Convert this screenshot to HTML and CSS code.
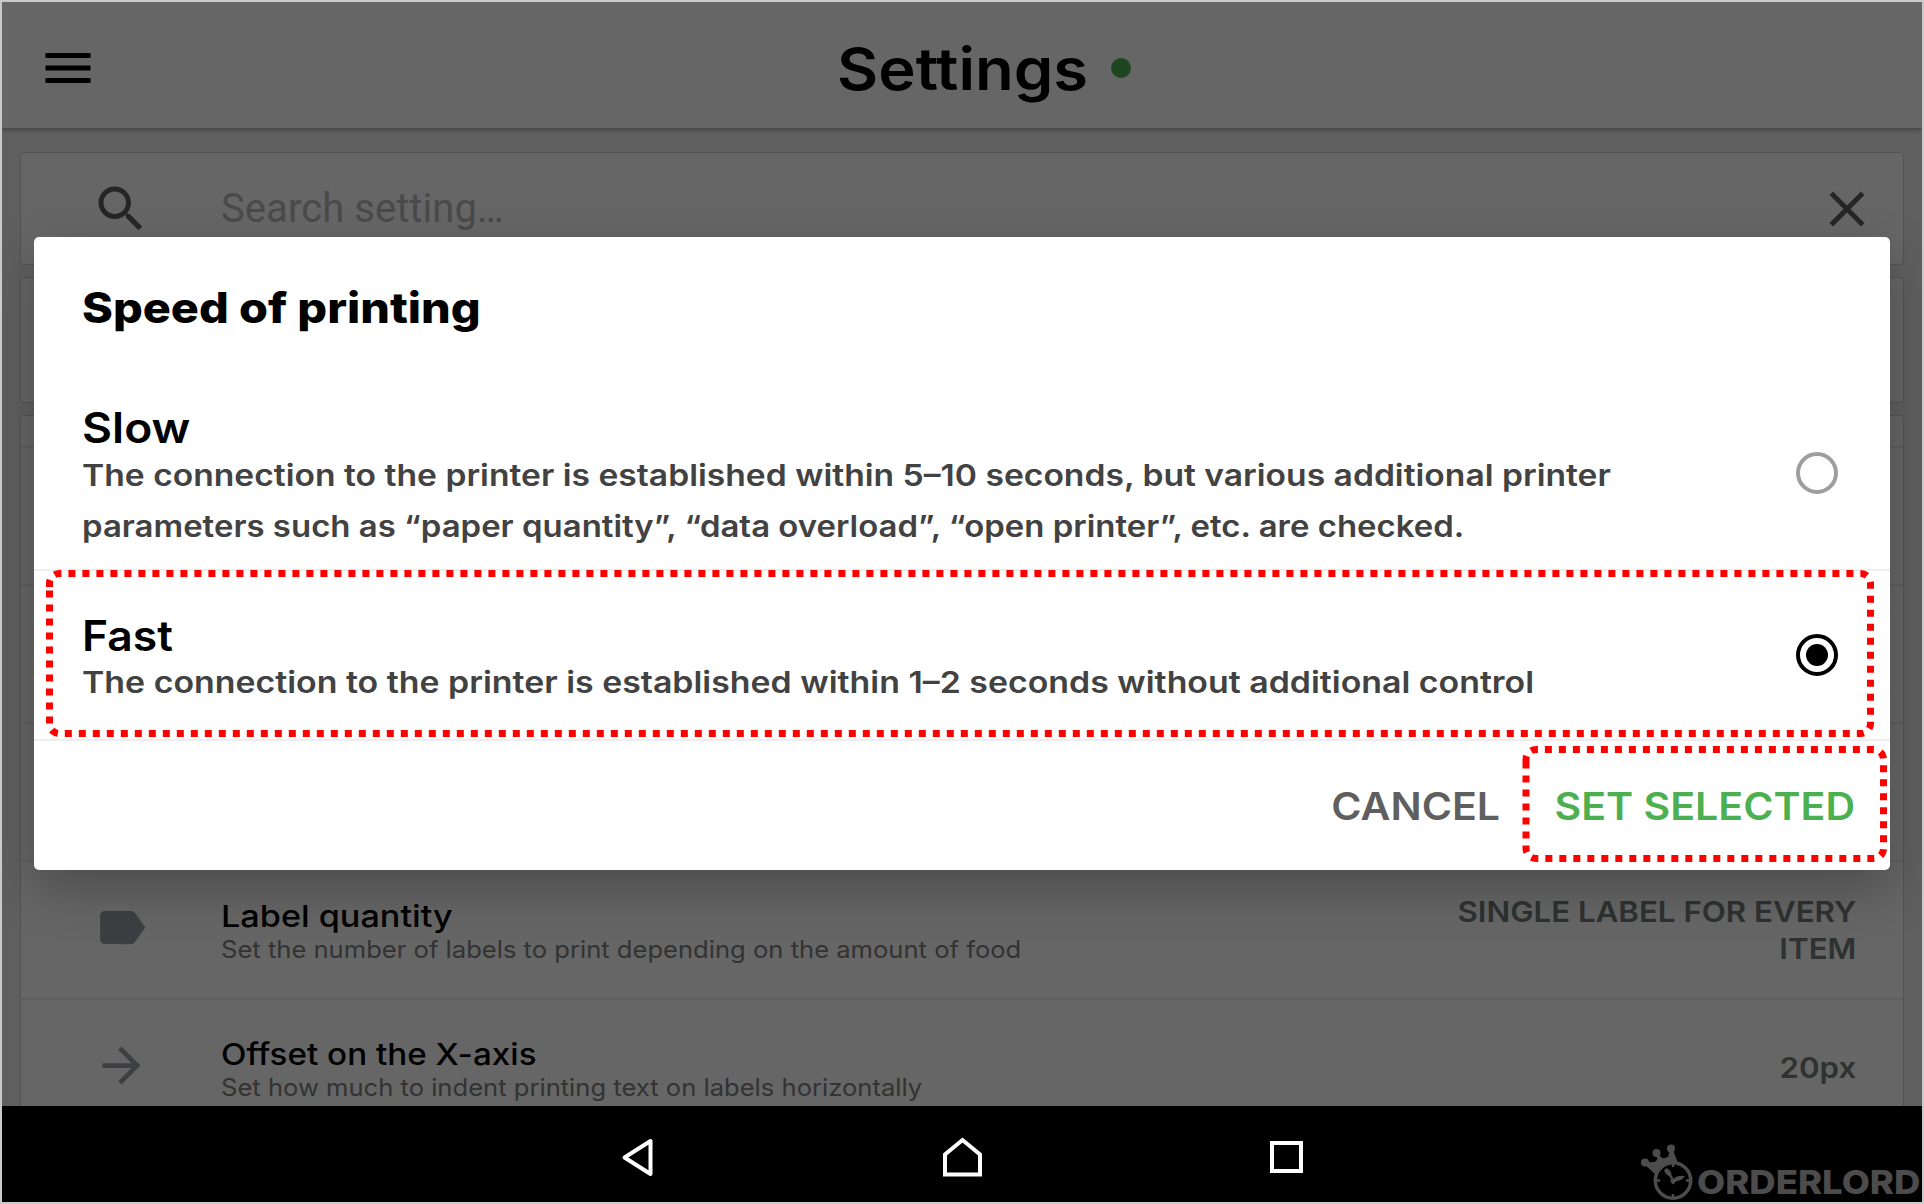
FILE: index.html
```html
<!DOCTYPE html>
<html lang="en">
<head>
<meta charset="utf-8">
<title>Settings</title>
<link rel="stylesheet" href="styles.css">
</head>
<body>
<div class="device">
  <div class="app">
    <header class="topbar">
      <svg class="menu-icon" viewBox="0 0 24 24"><path d="M3 18h18v-2H3v2zm0-5h18v-2H3v2zm0-7v2h18V6H3z"/></svg>
      <h1 class="page-title">Settings</h1>
      <span class="status-dot"></span>
    </header>
    <main class="content">
      <div class="card search">
        <svg class="search-icon" viewBox="0 0 24 24"><path d="M15.5 14h-.79l-.28-.27C15.41 12.59 16 11.11 16 9.5 16 5.91 13.09 3 9.5 3S3 5.91 3 9.5 5.91 16 9.5 16c1.61 0 3.09-.59 4.23-1.57l.27.28v.79l5 4.99L20.49 19l-4.99-5zm-6 0C7.01 14 5 11.99 5 9.5S7.01 5 9.5 5 14 7.01 14 9.5 11.99 14 9.5 14z"/></svg>
        <span class="placeholder">Search setting…</span>
        <svg class="clear-icon" viewBox="0 0 24 24"><path d="M19 6.41L17.59 5 12 10.59 6.41 5 5 6.41 10.59 12 5 17.59 6.41 19 12 13.41 17.59 19 19 17.59 13.41 12z"/></svg>
      </div>
      <div class="card group"></div>
      <div class="card list">
        <div class="list-head"></div>
        <div class="row"></div>
        <div class="row"></div>
        <div class="row"></div>
        <div class="row">
          <svg class="row-icon" viewBox="0 0 24 24"><path d="M17.63 5.84C17.27 5.33 16.67 5 16 5L5 5.01C3.9 5.01 3 5.9 3 7v10c0 1.1.9 1.99 2 1.99L16 19c.67 0 1.27-.33 1.63-.84L22 12l-4.37-6.16z"/></svg>
          <div class="row-text">
            <div class="row-title quantity">Label quantity</div>
            <div class="row-sub">Set the number of labels to print depending on the amount of food</div>
          </div>
          <div class="row-value">SINGLE LABEL FOR EVERY<br>ITEM</div>
        </div>
        <div class="row">
          <svg class="row-icon" viewBox="0 0 24 24"><path d="M12 4l-1.41 1.41L16.17 11H4v2h12.17l-5.58 5.59L12 20l8-8z"/></svg>
          <div class="row-text">
            <div class="row-title">Offset on the X-axis</div>
            <div class="row-sub">Set how much to indent printing text on labels horizontally</div>
          </div>
          <div class="row-value single">20px</div>
        </div>
      </div>
    </main>
    <div class="backdrop"></div>
    <section class="dialog">
      <h2 class="dialog-title">Speed of printing</h2>
      <div class="option slow">
        <div class="option-text">
          <div class="option-title">Slow</div>
          <div class="option-desc line-a">The connection to the printer is established within 5–10 seconds, but various additional printer</div>
          <div class="option-desc line-b">parameters such as “paper quantity”, “data overload”, “open printer”, etc. are checked.</div>
        </div>
        <span class="radio"></span>
      </div>
      <div class="option fast">
        <div class="option-text">
          <div class="option-title">Fast</div>
          <div class="option-desc line-c">The connection to the printer is established within 1–2 seconds without additional control</div>
        </div>
        <span class="radio checked"></span>
      </div>
      <div class="actions">
        <span class="btn cancel">CANCEL</span>
        <span class="btn confirm">SET SELECTED</span>
      </div>
    </section>
    <svg class="highlights" viewBox="0 0 1920 1104">
      <path d="M47.5 585V581.5A10 10 0 0 1 57.5 571.5H1858.5A10 10 0 0 1 1868.5 581.5V721.5A10 10 0 0 1 1858.5 731.5H57.5A10 10 0 0 1 47.5 721.5Z"/>
      <path d="M1524 761V757.5A10 10 0 0 1 1534 747.5H1871.5A10 10 0 0 1 1881.5 757.5V846.5A10 10 0 0 1 1871.5 856.5H1534A10 10 0 0 1 1524 846.5Z"/>
    </svg>
  </div>
  <nav class="navbar">
    <svg class="nav-icon" viewBox="0 0 60 60"><path d="M16.5 33.5L42.5 17V50Z" stroke-linejoin="round"/></svg>
    <svg class="nav-icon" viewBox="0 0 60 60"><path d="M13 50.5V30.5L30.5 16L48 30.5V50.5Z"/></svg>
    <svg class="nav-icon" viewBox="0 0 60 60"><rect x="16" y="19" width="29" height="28"/></svg>
    <div class="brand">
      <svg class="brand-mark" viewBox="0 0 56 56">
        <circle cx="33" cy="34.5" r="17.7" class="ring"/>
        <circle cx="5" cy="16.5" r="4"/><circle cx="16.5" cy="7" r="4"/><circle cx="31" cy="2.5" r="4"/>
        <path d="M4 18L7 15Q14 18 17 14Q18 12 15 8L19 8Q21 13 25 12Q30 11 29 4L33 4L38 17Q22 16 15 28Z"/>
        <path d="M33 17v4M33 48v4M15 34.5h5M46 34.5h5" class="tick"/>
        <path d="M24 24l3-2 4 4 .5 3L33.5 33Q37 29 45 30Q43 34 36 35.5L33 38.5L30.5 36L31 33L29 30Q25 28 24 24z"/>
      </svg>
      <span class="brand-name">ORDERLORD</span>
    </div>
  </nav>
</div>
</body>
</html>
```
FILE: styles.css
```css
* { box-sizing: border-box; }

body {
  margin: 0;
  padding: 2px;
  width: 1924px;
  height: 1204px;
  background: #cacaca;
  font-family: Inter, "Open Sans", sans-serif;
  color: #000;
  overflow: hidden;
}

h1, h2 { margin: 0; }

.device {
  display: flex;
  flex-direction: column;
  width: 1920px;
  height: 1200px;
  overflow: hidden;
}

.app {
  position: relative;
  height: 1104px;
  overflow: hidden;
  background: #eee;
  white-space: nowrap;
}

.page-title, .row-title, .row-sub, .dialog-title,
.option-title, .option-desc, .brand-name { transform-origin: 0 50%; }
.row-value, .btn { transform-origin: 100% 50%; }

/* top bar */
.topbar {
  position: relative;
  display: flex;
  align-items: center;
  height: 126px;
  padding-left: 36px;
  background: #fff;
  box-shadow: 0 2px 4px rgba(0, 0, 0, .3);
}
.menu-icon { width: 60px; height: 60px; margin-top: 6px; }
.page-title {
  width: 250px;
  margin: 8px 0 0 739px;
  font-size: 58px;
  font-weight: 600;
  line-height: 70px;
  transform: scaleX(1.092);
}
.status-dot {
  width: 20px;
  height: 20px;
  margin: 6px 0 0 24px;
  border-radius: 50%;
  background: #4caf50;
}

/* settings */
.content {
  display: flex;
  flex-direction: column;
  gap: 12px;
  padding: 24px 18px 0;
}
.card {
  border: 1px solid #d0d0d0;
  border-radius: 4px;
  background: #fff;
}
.search {
  display: flex;
  align-items: center;
  height: 113px;
  padding: 0 26px 0 70px;
}
.search-icon, .clear-icon { width: 60px; height: 60px; fill: #606060; }
.placeholder {
  flex: 1;
  margin-left: 70px;
  font: 400 40px Roboto, sans-serif;
  letter-spacing: .06px;
  color: #b9b9b9;
}
.group { height: 126px; }
.list { height: 800px; }
.list-head { height: 32px; border-bottom: 2px solid #eee; }
.row {
  display: flex;
  align-items: flex-start;
  height: 138px;
  padding: 30px 47px 0 72px;
  border-bottom: 2px solid #eee;
}
.row-icon { width: 57px; height: 57px; margin-top: 7px; fill: #9b9fa5; }
.row-text { flex: 1; margin: 7px 0 0 71px; }
.row-title {
  font-size: 30px;
  font-weight: 500;
  line-height: 34px;
  transform: scaleX(1.106);
}
.row-title.quantity { transform: scaleX(1.14); }
.row-sub {
  padding-top: 3px;
  font-size: 24px;
  line-height: 28px;
  color: #808080;
  transform: scaleX(1.066);
}
.row-value {
  margin-top: 1px;
  font-size: 29px;
  font-weight: 600;
  line-height: 37px;
  text-align: right;
  color: #757d7a;
  transform: scaleX(1.077);
}
.row-value.single { margin-top: 19px; }

/* dialog */
.backdrop { position: absolute; inset: 0; background: rgba(0, 0, 0, .6); }
.dialog {
  position: absolute;
  left: 32px;
  top: 235px;
  width: 1856px;
  height: 633px;
  padding-top: 46px;
  border-radius: 5px;
  background: #fff;
  box-shadow: 0 20px 50px rgba(0, 0, 0, .25);
}
.dialog-title {
  margin-left: 48px;
  font-size: 42px;
  font-weight: 800;
  line-height: 50px;
  transform: scaleX(1.114);
}
.option {
  display: flex;
  justify-content: space-between;
  align-items: flex-start;
  padding: 0 52px 0 48px;
  border-bottom: 2px solid #eee;
}
.slow { height: 238px; padding-top: 72px; }
.fast { height: 170px; padding-top: 42px; }
.option-title { font-size: 42px; font-weight: 600; line-height: 45px; transform: scaleX(1.1); }
.fast .option-title { transform: scaleX(1.059); }
.option-desc { font-size: 30px; font-weight: 600; line-height: 51px; color: #424242; }
.line-a { transform: scaleX(1.121); }
.line-b { transform: scaleX(1.098); }
.line-c { margin-top: -1px; transform: scaleX(1.129); }
.radio {
  display: grid;
  place-items: center;
  width: 42px;
  height: 42px;
  margin-top: 47px;
  border: 4px solid #9e9e9e;
  border-radius: 50%;
}
.radio.checked { margin-top: 21px; border-color: #000; }
.radio.checked::after {
  content: "";
  width: 22px;
  height: 22px;
  border-radius: 50%;
  background: #000;
}
.actions {
  display: flex;
  justify-content: flex-end;
  align-items: center;
  gap: 77px;
  height: 129px;
  padding-right: 35px;
}
.btn { font-size: 38px; font-weight: 600; transform: scaleX(1.081); }
.cancel { color: #5f5f5f; }
.confirm { color: #4caf50; }

.highlights {
  position: absolute;
  inset: 0;
  width: 1920px;
  height: 1104px;
  fill: none;
  stroke: #f00;
  stroke-width: 7;
  stroke-dasharray: 7;
}

/* system navigation */
.navbar {
  position: relative;
  display: flex;
  justify-content: center;
  align-items: center;
  gap: 264px;
  height: 96px;
  background: #000;
}
.nav-icon {
  width: 60px;
  height: 60px;
  overflow: visible;
  fill: none;
  stroke: #fff;
  stroke-width: 4;
}
.brand {
  position: absolute;
  left: 1638px;
  top: 40px;
  display: flex;
  align-items: flex-start;
  color: #4c4c4c;
}
.brand-mark { width: 56px; height: 56px; overflow: visible; fill: #4c4c4c; }
.ring { fill: #000; stroke: #4c4c4c; stroke-width: 3.5; }
.tick { fill: none; stroke: #4c4c4c; stroke-width: 2.5; }
.brand-name {
  margin: 16px 0 0 1px;
  font-size: 33px;
  font-weight: 800;
  line-height: 40px;
  transform: scaleX(1.105);
}
```
